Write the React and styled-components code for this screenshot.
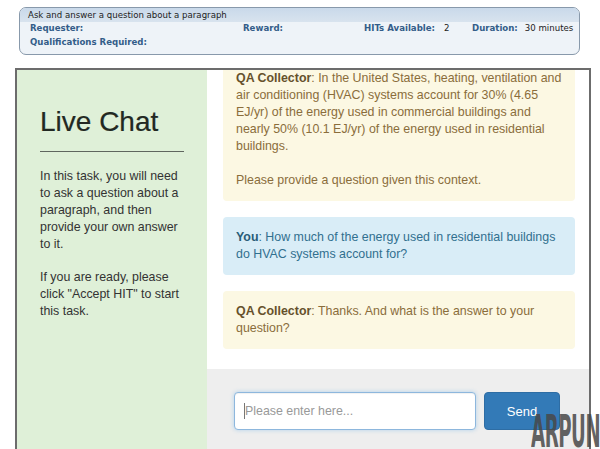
import React from 'react';
import styled, { createGlobalStyle } from 'styled-components';

const GlobalStyle = createGlobalStyle`
  html, body {
    margin: 0;
    padding: 0;
    background: #fff;
    overflow: hidden;
  }
`;

// ______________ HIT summary box ______________

const Page = styled.div`
  position: relative;
  height: 449px;
  padding-top: 7px;
  box-sizing: border-box;
  overflow: hidden;
`;

const HitBox = styled.div`
  margin-left: 19px;
  width: 561px;
  height: 48px;
  box-sizing: border-box;
  border: 1px solid #8899ab;
  border-radius: 7px;
  background: #eef3f8;
  font-family: "DejaVu Sans", Verdana, sans-serif;
  font-size: 8.6px;
  overflow: hidden;
`;

const HitTitle = styled.div`
  height: 14px;
  line-height: 14px;
  padding-left: 8px;
  color: #222;
  background: linear-gradient(#c9d9ea, #d8e3ee);
`;

const HitGrid = styled.div`
  display: grid;
  grid-template-columns: 213px 121px 108px auto;
  padding-left: 10px;
  line-height: 13.5px;
`;

const Field = styled.div`
  display: flex;
  gap: ${p => p.$gap || 9}px;
  white-space: nowrap;
`;

const Label = styled.span`
  font-weight: bold;
  color: #335d89;
`;

const Value = styled.span`
  color: #222;
`;

// ______________ chat frame ______________

const Frame = styled.div`
  margin: 13px 0 0 15px;
  width: 576px;
  height: 400px;
  box-sizing: border-box;
  border: 2px solid #6c6c6c;
  border-bottom: none;
  display: grid;
  grid-template-columns: 190px 1fr;
  font-family: "Liberation Sans", Arial, sans-serif;
  font-size: 12.4px;
  line-height: 17px;
`;

const Sidebar = styled.div`
  background: #dff0d8;
  padding: 0 23px;
  color: #333;
`;

const Title = styled.h1`
  margin: 37px 0 0;
  font-size: 28px;
  line-height: 29px;
  font-weight: normal;
  color: #222822;
  -webkit-text-stroke: 0.2px #222822;
`;

const Rule = styled.hr`
  margin: 15px 0 0;
  border: none;
  border-top: 1px solid #5f665f;
`;

const Note = styled.p`
  margin: 16px 0 0;
`;

const ChatColumn = styled.div`
  display: flex;
  flex-direction: column;
  background: #fff;
`;

const Messages = styled.div`
  height: 299px;
  flex-shrink: 0;
  box-sizing: border-box;
  overflow: hidden;
  display: flex;
  flex-direction: column;
  justify-content: flex-end;
  gap: 16px;
  padding: 0 14px 20px 16px;
`;

const Bubble = styled.div`
  flex-shrink: 0;
  padding: 12px 13px;
  border-radius: 4px;
  background: ${p => (p.$mine ? '#d9edf7' : '#fcf8e3')};
  color: ${p => (p.$mine ? '#31708f' : '#8a6d3b')};

  p {
    margin: 0;
  }
  p + p {
    margin-top: 17px;
  }
  b {
    color: ${p => (p.$mine ? '#2a5d78' : '#66512c')};
  }
`;

const Composer = styled.div`
  flex: 1;
  background: #eeeeee;
  display: flex;
  gap: 8px;
  padding: 23px 29px 0 27px;
  align-items: flex-start;
`;

const InputWrap = styled.div`
  position: relative;
  flex: 1;
`;

const Input = styled.input`
  width: 100%;
  height: 38px;
  box-sizing: border-box;
  border: 1px solid #8db7dd;
  border-radius: 4px;
  box-shadow: inset 0 1px 1px rgba(0, 0, 0, 0.06), 0 0 4px rgba(102, 175, 233, 0.45);
  padding: 0 10px;
  font-family: "Liberation Sans", Arial, sans-serif;
  font-size: 12.4px;
  outline: none;
  background: #fff;

  &::placeholder {
    color: #999;
  }
`;

const Caret = styled.span`
  position: absolute;
  left: 10px;
  top: 11px;
  width: 1px;
  height: 16px;
  background: #777;
`;

const SendButton = styled.button`
  width: 76px;
  height: 38px;
  border: 1px solid #2e6da4;
  border-radius: 4px;
  background: #337ab7;
  color: #fff;
  font-family: "Liberation Sans", Arial, sans-serif;
  font-size: 13px;
`;

const Watermark = styled.div`
  position: absolute;
  left: 531px;
  top: 410px;
  font-family: "DejaVu Sans Condensed", "DejaVu Sans", sans-serif;
  font-weight: bold;
  font-size: 44px;
  line-height: 44px;
  letter-spacing: -1px;
  color: rgba(72, 72, 72, 0.85);
  transform: scaleX(0.46);
  transform-origin: left top;
  white-space: nowrap;
`;

export default function App() {
  return (
    <>
      <GlobalStyle />
      <Page>
        <HitBox>
          <HitTitle>Ask and answer a question about a paragraph</HitTitle>
          <HitGrid>
            <Field><Label>Requester:</Label></Field>
            <Field><Label>Reward:</Label></Field>
            <Field><Label>HITs Available:</Label><Value>2</Value></Field>
            <Field $gap={7}><Label>Duration:</Label><Value>30 minutes</Value></Field>
            <Field><Label>Qualifications Required:</Label></Field>
          </HitGrid>
        </HitBox>

        <Frame>
          <Sidebar>
            <Title>Live Chat</Title>
            <Rule />
            <Note>In this task, you will need to ask a question about a paragraph, and then provide your own answer to it.</Note>
            <Note>If you are ready, please click "Accept HIT" to start this task.</Note>
          </Sidebar>

          <ChatColumn>
            <Messages>
              <Bubble>
                <p><b>QA Collector</b>: In the United States, heating, ventilation and air conditioning (HVAC) systems account for 30% (4.65 EJ/yr) of the energy used in commercial buildings and nearly 50% (10.1 EJ/yr) of the energy used in residential buildings.</p>
                <p>Please provide a question given this context.</p>
              </Bubble>
              <Bubble $mine>
                <p><b>You</b>: How much of the energy used in residential buildings do HVAC systems account for?</p>
              </Bubble>
              <Bubble>
                <p><b>QA Collector</b>: Thanks. And what is the answer to your question?</p>
              </Bubble>
            </Messages>
            <Composer>
              <InputWrap>
                <Input placeholder="Please enter here..." />
                <Caret />
              </InputWrap>
              <SendButton>Send</SendButton>
            </Composer>
          </ChatColumn>
        </Frame>

        <Watermark>ARPUN</Watermark>
      </Page>
    </>
  );
}
